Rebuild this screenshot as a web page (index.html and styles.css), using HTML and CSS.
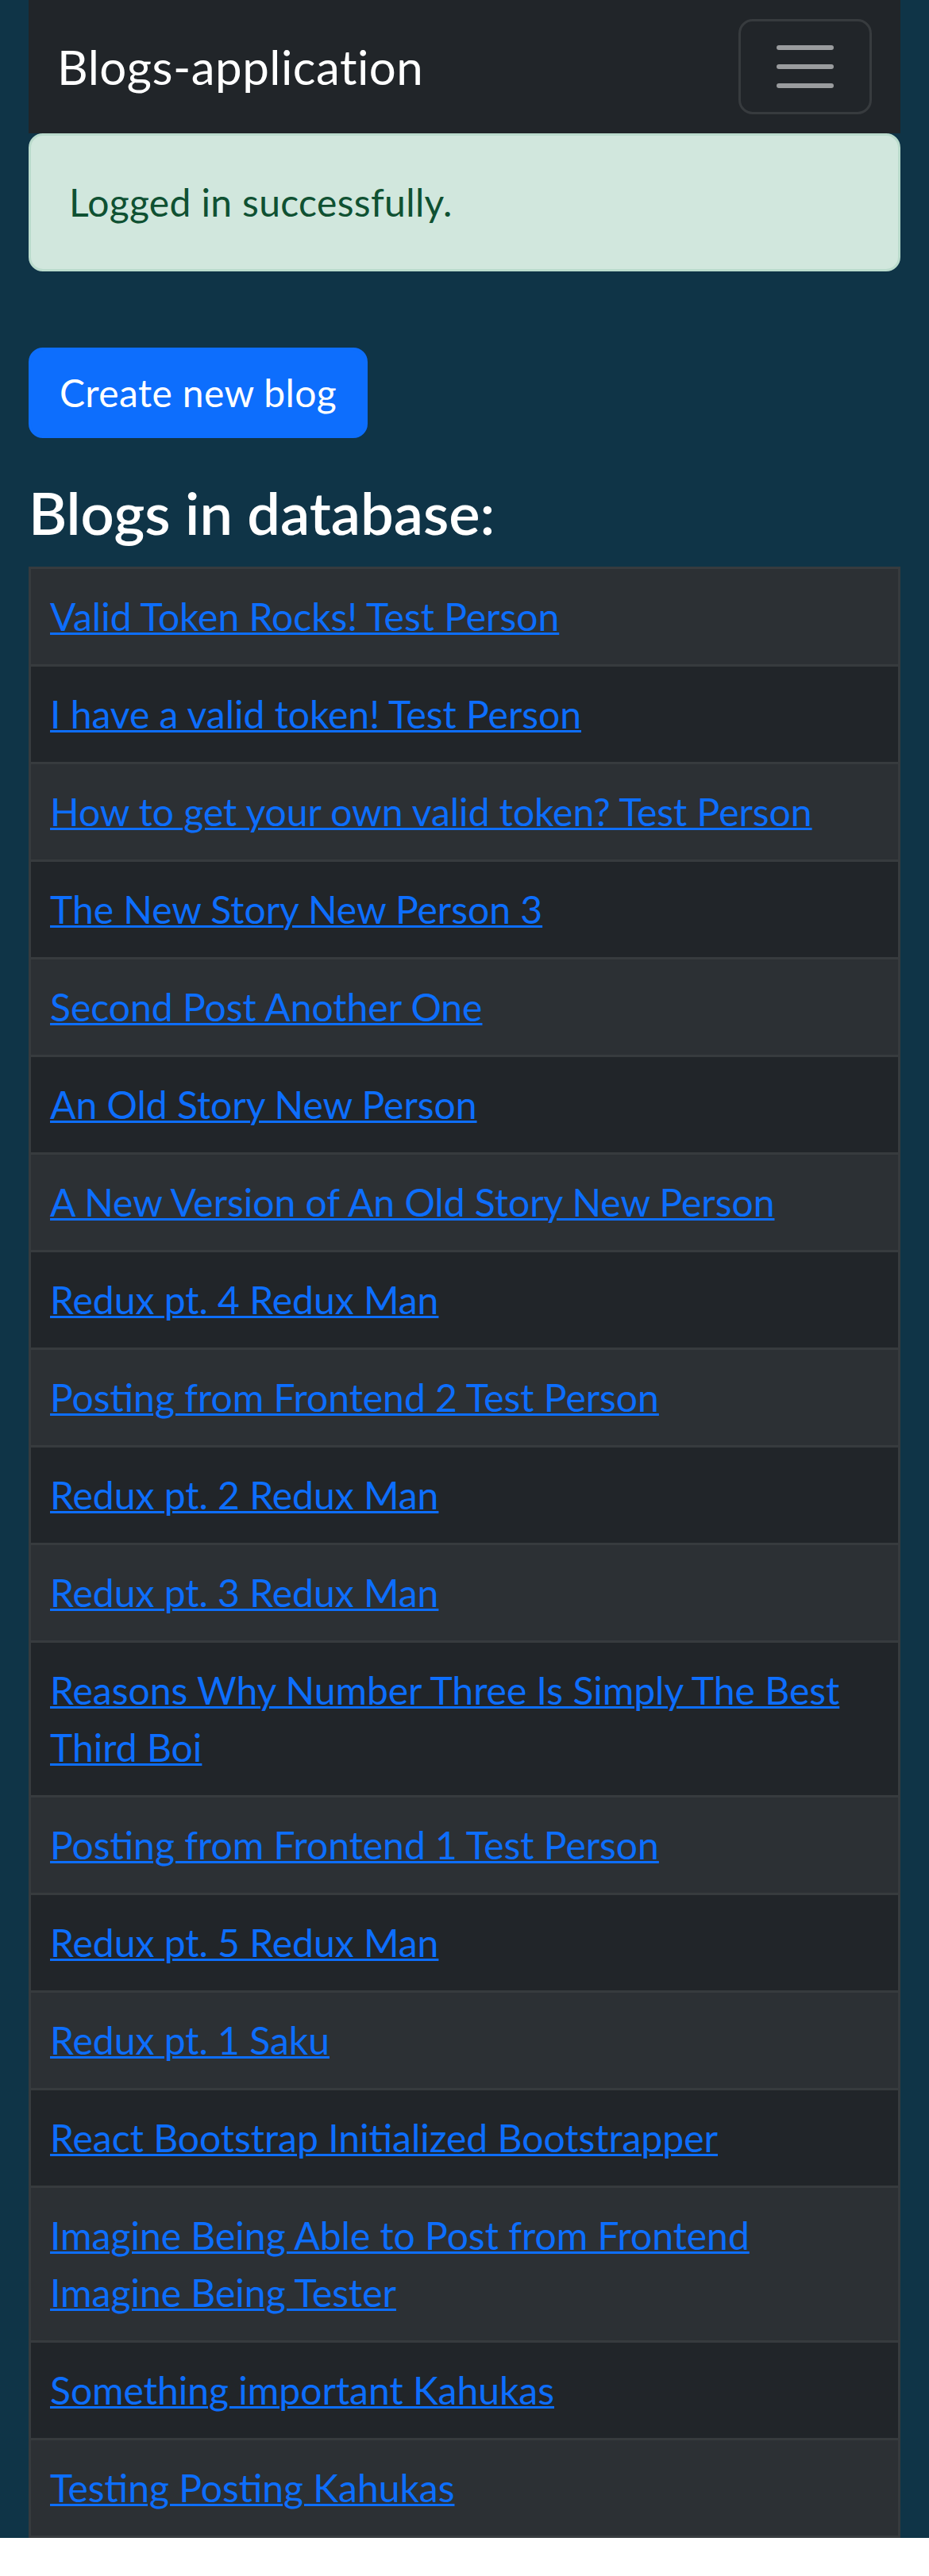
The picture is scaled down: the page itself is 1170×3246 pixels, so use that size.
FILE: index.html
```html
<!DOCTYPE html>
<html lang="en">
<head>
<meta charset="utf-8">
<title>Blogs-application</title>
<link rel="stylesheet" href="styles.css">
</head>
<body>
<div class="page">
  <div class="container">
    <nav class="navbar">
      <a class="brand" href="#">Blogs-application</a>
      <button class="toggler" type="button" aria-label="Toggle navigation">
        <svg class="toggler-icon" viewBox="0 0 30 30" width="90" height="90"><path d="M4 7h22M4 15h22M4 23h22" stroke="rgba(255,255,255,0.55)" stroke-width="2" stroke-linecap="round" fill="none"/></svg>
      </button>
    </nav>
    <div class="alert">Logged in successfully.</div>
    <div class="actions"><button class="btn" type="button">Create new blog</button></div>
    <h2 class="title">Blogs in database:</h2>
    <table class="blogs">
      <tbody>
        <tr><td><a href="#">Valid Token Rocks! Test Person</a></td></tr>
        <tr><td><a href="#">I have a valid token! Test Person</a></td></tr>
        <tr><td><a href="#">How to get your own valid token? Test Person</a></td></tr>
        <tr><td><a href="#">The New Story New Person 3</a></td></tr>
        <tr><td><a href="#">Second Post Another One</a></td></tr>
        <tr><td><a href="#">An Old Story New Person</a></td></tr>
        <tr><td><a href="#">A New Version of An Old Story New Person</a></td></tr>
        <tr><td><a href="#">Redux pt. 4 Redux Man</a></td></tr>
        <tr><td><a href="#">Posting from Frontend 2 Test Person</a></td></tr>
        <tr><td><a href="#">Redux pt. 2 Redux Man</a></td></tr>
        <tr><td><a href="#">Redux pt. 3 Redux Man</a></td></tr>
        <tr><td><a href="#">Reasons Why Number Three Is Simply The Best Third Boi</a></td></tr>
        <tr><td><a href="#">Posting from Frontend 1 Test Person</a></td></tr>
        <tr><td><a href="#">Redux pt. 5 Redux Man</a></td></tr>
        <tr><td><a href="#">Redux pt. 1 Saku</a></td></tr>
        <tr><td><a href="#">React Bootstrap Initialized Bootstrapper</a></td></tr>
        <tr><td><a href="#">Imagine Being Able to Post from Frontend Imagine Being Tester</a></td></tr>
        <tr><td><a href="#">Something important Kahukas</a></td></tr>
        <tr><td><a href="#">Testing Posting Kahukas</a></td></tr>
      </tbody>
    </table>
  </div>
</div>
</body>
</html>
```
FILE: styles.css
```css
html, body {
  margin: 0;
  padding: 0;
}
body {
  background: #ffffff;
  font-family: Lato, "Liberation Sans", sans-serif;
  font-size: 48px;
  line-height: 1.5;
  color: #dee2e6;
}
.page {
  background: #0f3447;
  margin-bottom: 48px;
}
.container {
  padding: 0 36px;
}
.navbar {
  background: #212529;
  display: flex;
  align-items: center;
  justify-content: space-between;
  padding: 24px 36px;
}
.brand {
  color: #ffffff;
  text-decoration: none;
  font-size: 60px;
  line-height: 1.5;
  letter-spacing: 0.5px;
  padding: 15px 0;
}
.toggler {
  display: flex;
  padding: 12px 36px;
  background: transparent;
  border: 3px solid rgba(255, 255, 255, 0.1);
  border-radius: 18px;
  margin: 0;
}
.toggler-icon {
  display: block;
  width: 90px;
  height: 90px;
}
.alert {
  background: #d1e7dd;
  border: 3px solid #badbcc;
  color: #0f5132;
  padding: 48px;
  border-radius: 18px;
  margin-bottom: 48px;
  letter-spacing: 0.35px;
}
.actions {
  display: flex;
  padding: 48px 0;
}
.btn {
  font-family: inherit;
  font-size: 48px;
  line-height: 72px;
  letter-spacing: 0.4px;
  color: #ffffff;
  background: #0d6efd;
  border: 3px solid #0d6efd;
  border-radius: 18px;
  padding: 18px 36px;
  margin: 0;
}
.title {
  margin: 0 0 23px;
  padding-top: 2px;
  font-size: 74px;
  line-height: 1.2;
  font-weight: 600;
  color: #ffffff;
}
.blogs {
  width: 100%;
  border-collapse: separate;
  border-spacing: 0;
}
.blogs td {
  padding: 24px;
  border-top: 3px solid #373b3e;
  border-left: 3px solid #373b3e;
  border-right: 3px solid #373b3e;
  background: #212529;
  vertical-align: top;
}
.blogs tr:nth-child(odd) td {
  background: #2c3034;
}
.blogs tr:last-child td {
  border-bottom: 3px solid #373b3e;
}
.blogs a {
  color: #0d6efd;
  text-decoration: underline;
  text-decoration-thickness: 3px;
}
```
